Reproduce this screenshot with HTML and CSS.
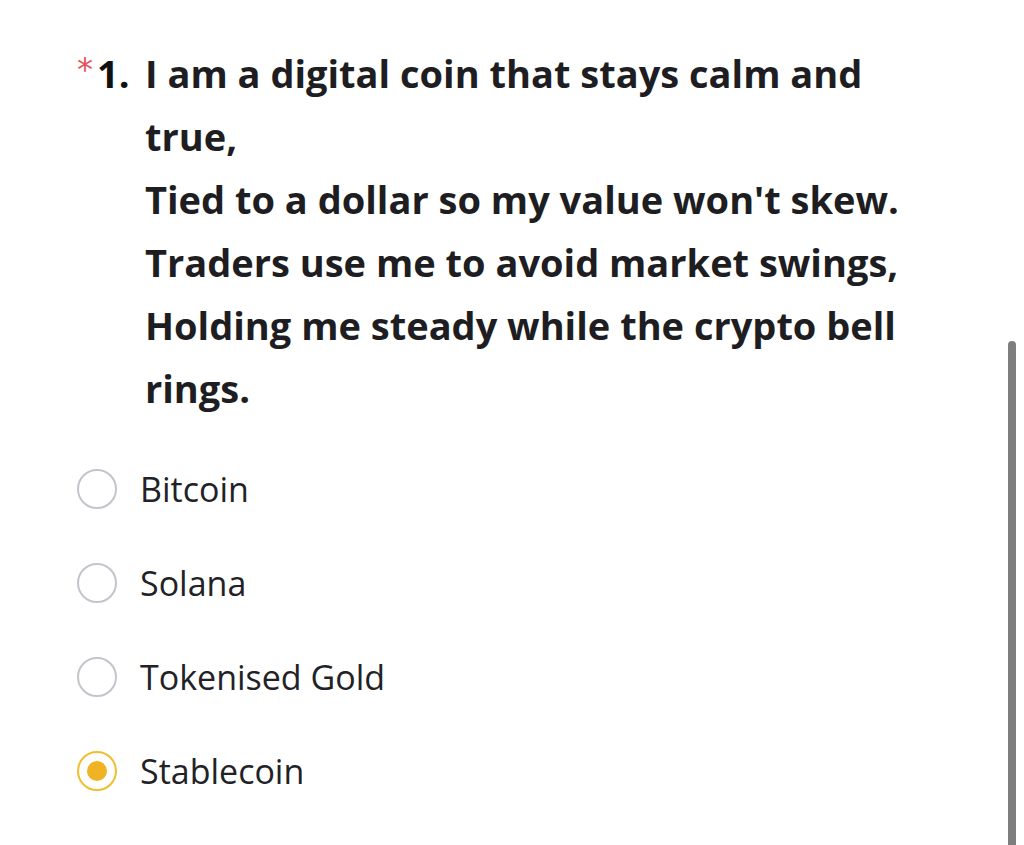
FILE: index.html
```html
<!DOCTYPE html>
<html>
<head>
<meta charset="utf-8">
<link rel="stylesheet" href="styles.css">
</head>
<body>
<div class="page">
  <div class="question">
    <span class="req">*</span>
    <span class="num">1.</span>
    <div class="qtext">
      I am a digital coin that stays calm and true,<br>
      Tied to a dollar so my value won't skew.<br>
      Traders use me to avoid market swings,<br>
      Holding me steady while the crypto bell rings.
    </div>
  </div>
  <div class="options">
    <div class="opt"><span class="radio"></span><span class="label">Bitcoin</span></div>
    <div class="opt"><span class="radio"></span><span class="label">Solana</span></div>
    <div class="opt"><span class="radio"></span><span class="label">Tokenised Gold</span></div>
    <div class="opt"><span class="radio checked"></span><span class="label">Stablecoin</span></div>
  </div>
</div>
<div class="scrollbar"></div>
</body>
</html>
```
FILE: styles.css
```css
html, body {
  margin: 0;
  padding: 0;
  background: #ffffff;
  width: 1024px;
  height: 845px;
  overflow: hidden;
}
body {
  font-family: "Open Sans", Lato, sans-serif;
  color: #1d1d1f;
}
.page {
  padding: 42px 0 0 77px;
}
.question {
  display: flex;
  align-items: flex-start;
  width: 880px;
}
.req {
  color: #e4505e;
  font-size: 32px;
  line-height: 1;
  margin-top: 11px;
  width: 20px;
  font-family: "DejaVu Sans", sans-serif;
}
.num {
  font-size: 38px;
  font-weight: 700;
  line-height: 63px;
  width: 48px;
  color: #111;
}
.qtext {
  font-size: 38px;
  font-weight: 700;
  line-height: 63px;
  width: 780px;
  color: #1e1e22;
}
.options {
  margin-top: 49px;
  display: flex;
  flex-direction: column;
  gap: 54px;
}
.opt {
  display: flex;
  align-items: center;
  height: 40px;
}
.radio {
  width: 36px;
  height: 36px;
  border: 2px solid #c4c4ca;
  border-radius: 50%;
  box-sizing: content-box;
  margin-right: 23px;
  position: relative;
}
.radio.checked {
  border-color: #f0be2e;
}
.radio.checked::after {
  content: "";
  position: absolute;
  left: 8px;
  top: 8px;
  width: 20px;
  height: 20px;
  border-radius: 50%;
  background: #f0b323;
}
.label {
  font-size: 34px;
  color: #222226;
}
.scrollbar {
  position: absolute;
  left: 1008px;
  top: 341px;
  width: 8px;
  height: 520px;
  background: #7e7e7e;
  border-radius: 4px;
}
```
